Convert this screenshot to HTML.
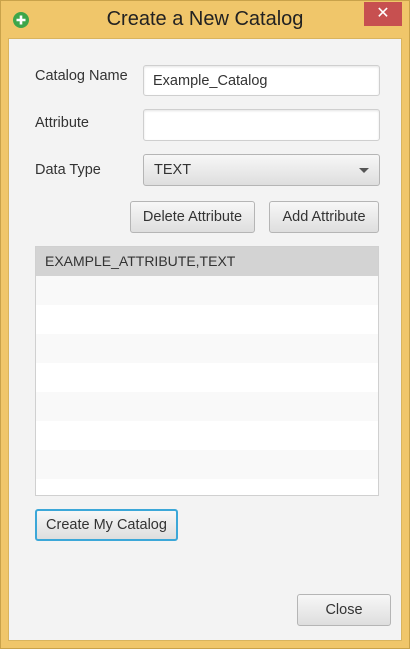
<!DOCTYPE html>
<html><head><style>
*{margin:0;padding:0;box-sizing:border-box}
body{width:410px;height:649px;background:#f0c66a;font-family:"Liberation Sans",sans-serif;position:relative;overflow:hidden;color:#333}
.frame{position:absolute;left:0;top:0;width:410px;height:649px;border:1px solid #c9a24a}
.title{position:absolute;left:0;top:8px;width:410px;text-align:center;font-size:20px;color:#222}
.x{position:absolute;left:364px;top:2px;width:38px;height:24px;background:#c75050;color:#fff;font-size:16px;text-align:center;line-height:23px}
.content{position:absolute;left:8px;top:38px;width:394px;height:603px;background:#f3f3f3;border:1px solid #d9b45e}
.a{position:absolute}
.lbl{font-size:14.5px;color:#333}
.inp{background:#fff;border:1px solid #cfcfcf;border-radius:3px;box-shadow:inset 0 1px 2px #e4e4e4;font-size:14.5px;padding-left:9px;line-height:30px}
.btn{background:linear-gradient(#f7f7f7,#dedede);border:1px solid #b5b5b5;border-radius:3px;font-size:14.5px;text-align:center;line-height:30px;color:#333}
.list{left:35px;top:246px;width:344px;height:250px;border:1px solid #d0d0d0;background:#fff;overflow:hidden}
.row{height:29px;font-size:14px;padding-left:9px;line-height:29px}
</style></head><body>
<div class="frame"></div>
<svg class="a" style="left:12px;top:11px" width="18" height="18" viewBox="0 0 18 18"><circle cx="9" cy="9" r="8" fill="#3da64a"/><path d="M9 4.5v9M4.5 9h9" stroke="#fff" stroke-width="2.6"/></svg>
<div class="title">Create a New Catalog</div>
<div class="x">✕</div>
<div class="content"></div>
<div class="a lbl" style="left:35px;top:68px">Catalog Name</div>
<div class="a inp" style="left:143px;top:65px;width:237px;height:31px">Example_Catalog</div>
<div class="a lbl" style="left:35px;top:115px">Attribute</div>
<div class="a inp" style="left:143px;top:109px;width:237px;height:32px"></div>
<div class="a lbl" style="left:35px;top:162px">Data Type</div>
<div class="a btn" style="left:143px;top:154px;width:237px;height:32px;text-align:left;padding-left:10px;line-height:31px">TEXT<span style="position:absolute;right:10px;top:13px;width:0;height:0;border-left:5px solid transparent;border-right:5px solid transparent;border-top:5px solid #555"></span></div>
<div class="a btn" style="left:130px;top:201px;width:125px;height:32px">Delete Attribute</div>
<div class="a btn" style="left:269px;top:201px;width:110px;height:32px">Add Attribute</div>
<div class="a list">
<div class="row" style="background:#d3d3d3">EXAMPLE_ATTRIBUTE,TEXT</div>
<div class="row" style="background:#f9f9f9"></div><div class="row"></div>
<div class="row" style="background:#f9f9f9"></div><div class="row"></div>
<div class="row" style="background:#f9f9f9"></div><div class="row"></div>
<div class="row" style="background:#f9f9f9"></div><div class="row"></div>
</div>
<div class="a btn" style="left:35px;top:509px;width:143px;height:32px;border:2px solid #3ba7d8;line-height:29px">Create My Catalog</div>
<div class="a btn" style="left:297px;top:594px;width:94px;height:32px">Close</div>
</body></html>
